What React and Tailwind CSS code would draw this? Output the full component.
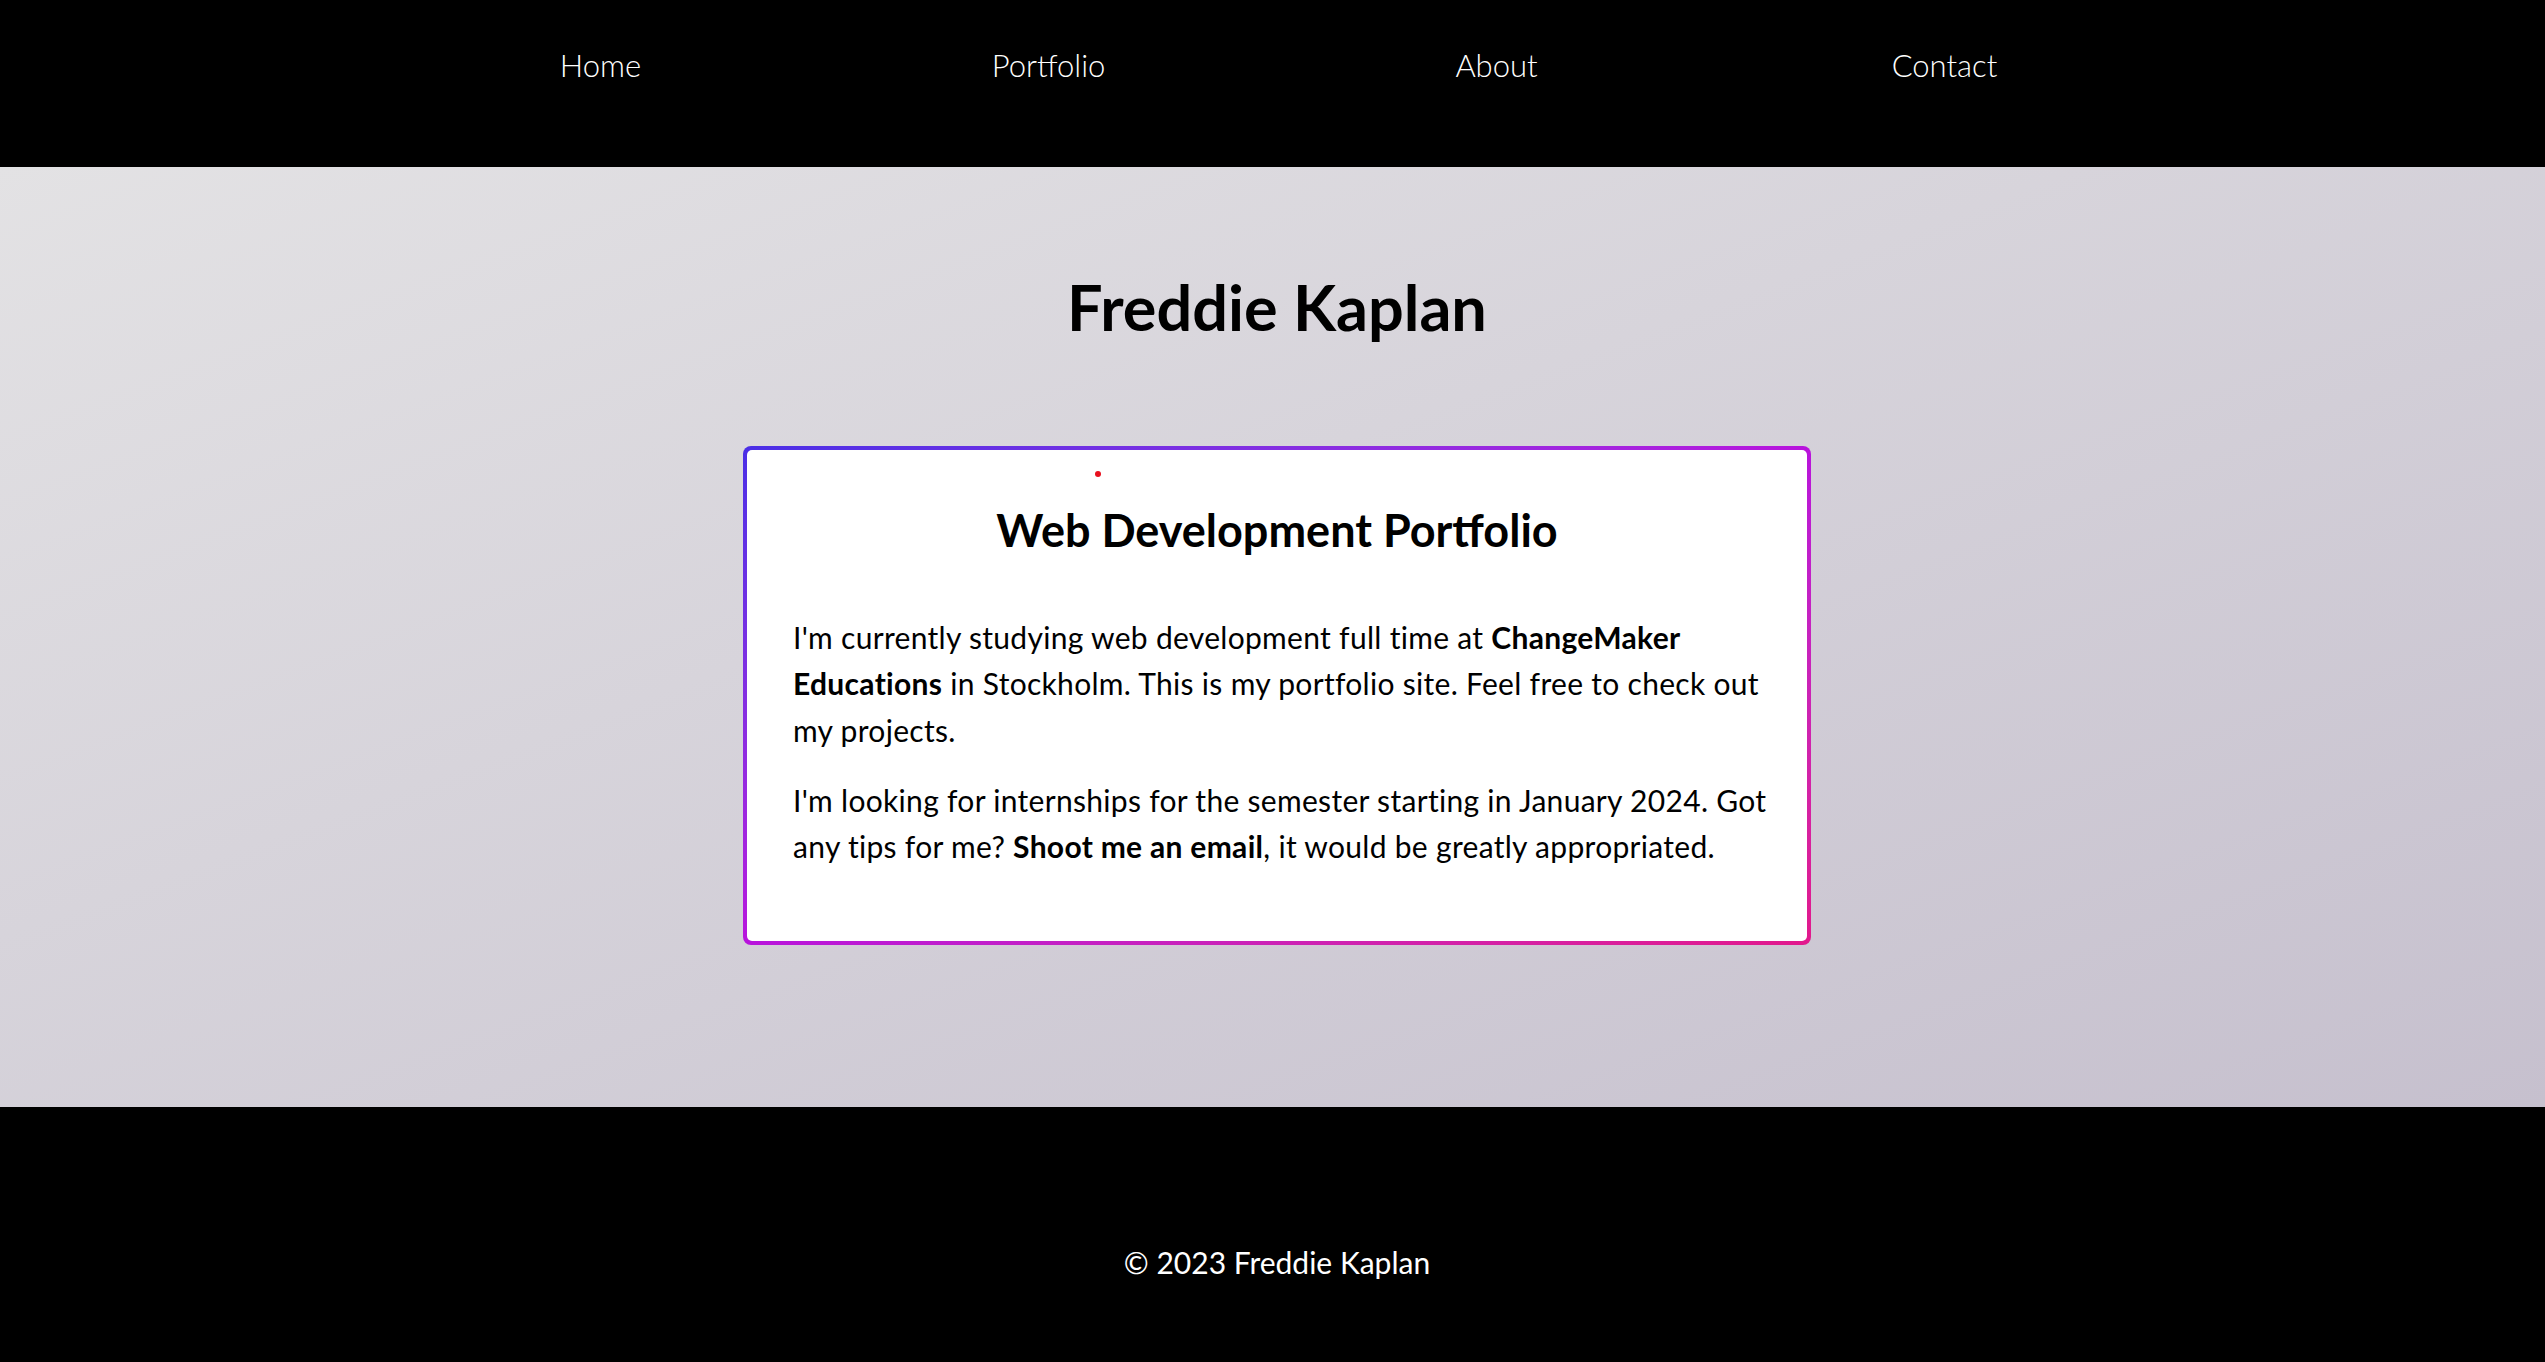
import React from 'react';

const links = ['Home', 'Portfolio', 'About', 'Contact'];

const App = () => {
  return (
    <div className="min-h-screen flex flex-col font-['Lato',sans-serif] text-black">
      {/* --- NAV --- */}
      <nav className="bg-black h-[167px] pt-[47px]">
        <ul className="w-[1792px] mx-auto grid grid-cols-4 text-center">
          {links.map((l) => (
            <li key={l}>
              <a href="#" className="text-white font-light text-[31px] leading-[1.2]">{l}</a>
            </li>
          ))}
        </ul>
      </nav>

      {/* --- MAIN --- */}
      <main className="flex-1 bg-linear-to-br from-[#e3e2e4] to-[#c6c0ce] pt-[102px] pl-[9px]">
        <h1 className="text-center font-bold text-[63px] leading-[1.2] mb-[101px]">Freddie Kaplan</h1>

        <div className="w-[1068px] mx-auto rounded-[8px] p-[4px] bg-linear-to-br from-[#4a2ee6] via-[#b813dc] to-[#e2188c]">
          <div className="relative bg-white rounded-[5px] pt-[53px] pb-[71px] pl-[46px] pr-[24px]">
            <span className="absolute left-[348px] top-[21px] w-[6px] h-[6px] rounded-full bg-[#e8101e]"></span>
            <h2 className="text-center font-bold text-[45px] leading-[1.2] mb-[57px] pr-[22px]">Web Development Portfolio</h2>
            <p className="text-[30px] tracking-[0.3px] leading-[46.5px] mb-[23.5px]">
              I'm currently studying web development full time at <strong className="font-bold">ChangeMaker Educations</strong> in Stockholm. This is my portfolio site. Feel free to check out my projects.
            </p>
            <p className="text-[30px] tracking-[0.3px] leading-[46.5px]">
              I'm looking for internships for the semester starting in January 2024. Got any tips for me? <strong className="font-bold">Shoot me an email</strong>, it would be greatly appropriated.
            </p>
          </div>
        </div>
      </main>

      {/* --- FOOTER --- */}
      <footer className="bg-black h-[255px] pt-[137px] pl-[9px] text-center">
        <p className="text-white text-[30px] leading-[1.2]">© 2023 Freddie Kaplan</p>
      </footer>
    </div>
  );
};

export default App;
